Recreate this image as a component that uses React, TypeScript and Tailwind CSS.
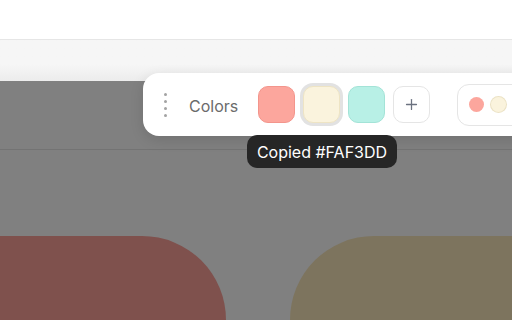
import { Plus } from 'lucide-react'

const swatches = [
  { hex: '#FCA69D', border: 'border-[#f3958c]' },
  { hex: '#FAF3DD', border: 'border-[#eee4c4]', active: true },
  { hex: '#B8F0E6', border: 'border-[#a3e3d7]' },
]

function Toolbar() {
  return (
    <div className="absolute left-[143px] top-[73px] flex h-[63px] w-[400px] items-center rounded-[16px] bg-white pl-[21px] shadow-[0_4px_14px_rgba(0,0,0,0.12)]">
      <div className="flex flex-col gap-[4px]">
        {[0, 1, 2, 3].map((i) => (
          <span key={i} className="block h-[3px] w-[3px] rounded-full bg-[#a3a3a3]" />
        ))}
      </div>
      <span className="ml-[22px] w-[48px] whitespace-nowrap pt-[2px] text-[16px] text-[#6b6b6b]">Colors</span>
      <div className="ml-[21px] flex items-center gap-[8px]">
        {swatches.map((s) => (
          <div
            key={s.hex}
            className={`h-[37px] w-[37px] rounded-[10px] border ${s.border} ${s.active ? 'ring-[3px] ring-[#e2e2e2]' : ''}`}
            style={{ backgroundColor: s.hex }}
          />
        ))}
        <button className="flex h-[37px] w-[37px] items-center justify-center rounded-[10px] border border-[#e5e5e5] bg-white text-[#6b7280]">
          <Plus size={17} strokeWidth={1.8} />
        </button>
      </div>
      <div className="ml-[13px] h-[32px] w-px bg-[#e8e8e8]" />
      <div className="ml-[14px] flex h-[42px] items-center gap-[7px] rounded-[12px] border border-[#e5e5e5] bg-white pl-[11px] pr-4">
        <span className="block h-[15px] w-[15px] rounded-full bg-[#FCA69D]" />
        <span className="block h-[15px] w-[15px] rounded-full bg-[#FAF3DD] ring-1 ring-[#ebe2c5]" />
        <span className="block h-[15px] w-[15px] rounded-full bg-[#B8F0E6]" />
      </div>
    </div>
  )
}

export default function App() {
  return (
    <div className="relative h-[320px] w-[512px] overflow-hidden bg-white font-['Inter',sans-serif]">
      <header className="h-[40px] border-b border-[#e6e6e6] bg-white" />
      <div className="h-[41px] bg-gradient-to-b from-[#f6f6f6] from-60% to-[#ececec]" />
      <main className="flex h-[239px] flex-col bg-[#808080]">
        <div className="h-[69px] border-b border-[#737373]" />
        <div className="mt-[86px] flex flex-1 justify-between">
          <div className="w-[226px] rounded-tr-[88px] bg-[#7f514d]" />
          <div className="w-[222px] rounded-tl-[88px] bg-[#7d745e]" />
        </div>
      </main>

      <Toolbar />

      <div className="absolute left-[247px] top-[135px] flex h-[33px] w-[150px] items-center justify-center rounded-[10px] bg-[#262626] pt-[1px] text-[16px] text-white">
        Copied #FAF3DD
      </div>
    </div>
  )
}
